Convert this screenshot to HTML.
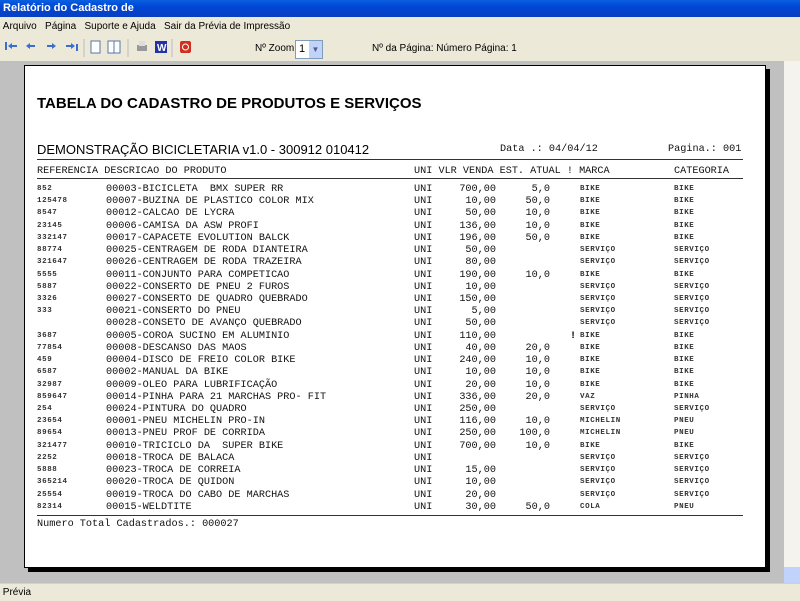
<!DOCTYPE html>
<html><head><meta charset="utf-8"><style>
body{margin:0;width:800px;height:600px;overflow:hidden;position:relative;background:#ece9d8;font-family:"Liberation Sans",sans-serif;}
.a{position:absolute;white-space:pre;}
#title{left:0;top:0;width:800px;height:17px;background:linear-gradient(#0a5fe0,#0046d5 40%,#0840c0);color:#fff;font-weight:bold;font-size:11px;line-height:17px;}
#menu{left:0;top:18px;width:800px;height:17px;font-size:10px;line-height:17px;background:#ece9d8}
#gray{left:0;top:61px;width:784px;height:522px;background:#c0c0c0;}
#sb{left:784px;top:61px;width:16px;height:522px;background:#f4f3ee;}
#paper{left:24px;top:65px;width:740px;height:501px;background:#fff;border:1px solid #000;box-shadow:4px 4px 0 #000;}
#status{left:0;top:583px;width:800px;height:17px;background:#ece9d8;border-top:1px solid #d4d0c8;font-size:10px;line-height:17px;}
.m{font-family:"Liberation Mono",monospace;font-size:10.2px;color:#111;}
.s{font-family:"Liberation Mono",monospace;font-size:7.5px;letter-spacing:0.6px;font-weight:bold;color:#333;}
.ln{position:absolute;left:37px;width:706px;height:1px;background:#333;}
</style></head><body>
<div class="a" id="title">&nbsp;Relatório do Cadastro de</div>
<div class="a" id="menu">&nbsp;Arquivo&nbsp;&nbsp; Página&nbsp;&nbsp; Suporte e Ajuda&nbsp;&nbsp; Sair da Prévia de Impressão</div>
<div class="a" style="left:0;top:36px;width:800px;height:25px;background:#ece9d8"></div>
<svg class="a" style="left:0;top:36px" width="200" height="24">
<g fill="#3a6fd0"><rect x="5" y="6" width="2" height="8"/><path d="M8 10l4-3v2h5v2h-5v2z"/>
<path d="M26 10l4-3v2h5v2h-5v2z"/><path d="M56 10l-4-3v2h-5v2h5v2z"/><path d="M75 10l-4-3v2h-5v2h5v2z"/><rect x="76" y="8" width="2" height="7"/></g>
<rect x="91" y="5" width="9" height="12" fill="#fff" stroke="#5577aa"/>
<rect x="108" y="5" width="6" height="12" fill="#fff" stroke="#5577aa"/><rect x="114" y="5" width="6" height="12" fill="#fff" stroke="#5577aa"/>
<rect x="137" y="9" width="10" height="6" fill="#999"/><rect x="139" y="5" width="6" height="5" fill="#ddd"/>
<rect x="155" y="5" width="12" height="12" fill="#2233aa"/><text x="157" y="15" font-size="10" fill="#fff" font-weight="bold">W</text>
<rect x="180" y="5" width="11" height="12" fill="#d03020" rx="2"/><circle cx="185.5" cy="11" r="3" fill="none" stroke="#fff"/>
<g stroke="#bbb"><line x1="84" y1="3" x2="84" y2="21"/><line x1="128" y1="3" x2="128" y2="21"/><line x1="172" y1="3" x2="172" y2="21"/></g>
</svg>
<div class="a" style="left:255px;top:43px;font-size:10px">Nº Zoom</div>
<div class="a" style="left:295px;top:40px;width:26px;height:17px;background:#fff;border:1px solid #7f9db9;font-size:11px;line-height:17px">&nbsp;1<span style="position:absolute;right:0;top:0;width:13px;height:17px;background:#c1d3fb;color:#4d6185;font-size:8px;text-align:center">▼</span></div>
<div class="a" style="left:372px;top:43px;font-size:10px">Nº da Página: Número Página: 1</div>
<div class="a" id="gray"></div><div class="a" id="sb"><div style="position:absolute;left:0;bottom:0;width:16px;height:16px;background:#c1d3fb"></div></div>
<div class="a" id="paper"></div>
<div class="a" style="left:37px;top:95px;font-size:15px;font-weight:bold">TABELA DO CADASTRO DE PRODUTOS E SERVIÇOS</div>
<div class="a" style="left:37px;top:142px;font-size:13px">DEMONSTRAÇÃO BICICLETARIA v1.0 - 300912 010412</div>
<div class="a m" style="left:500px;top:144px">Data .: 04/04/12</div>
<div class="a m" style="left:668px;top:144px">Pagina.: 001</div>
<div class="ln" style="top:159px"></div>
<div class="a m" style="left:37px;top:166px">REFERENCIA DESCRICAO DO PRODUTO</div>
<div class="a m" style="left:414px;top:166px">UNI VLR VENDA EST. ATUAL ! MARCA</div>
<div class="a m" style="left:674px;top:166px">CATEGORIA</div>
<div class="ln" style="top:178px"></div>
<div id="rows"></div>
<div class="ln" style="top:515px"></div>
<div class="a m" style="left:37px;top:519px">Numero Total Cadastrados.: 000027</div>
<div class="a" id="status">&nbsp;Prévia</div>
<script>
var d=[["852","00003-BICICLETA  BMX SUPER RR","700,00","5,0","BIKE","BIKE"],
["125478","00007-BUZINA DE PLASTICO COLOR MIX","10,00","50,0","BIKE","BIKE"],
["8547","00012-CALCAO DE LYCRA","50,00","10,0","BIKE","BIKE"],
["23145","00006-CAMISA DA ASW PROFI","136,00","10,0","BIKE","BIKE"],
["332147","00017-CAPACETE EVOLUTION BALCK","196,00","50,0","BIKE","BIKE"],
["88774","00025-CENTRAGEM DE RODA DIANTEIRA","50,00","","SERVIÇO","SERVIÇO"],
["321647","00026-CENTRAGEM DE RODA TRAZEIRA","80,00","","SERVIÇO","SERVIÇO"],
["5555","00011-CONJUNTO PARA COMPETICAO","190,00","10,0","BIKE","BIKE"],
["5887","00022-CONSERTO DE PNEU 2 FUROS","10,00","","SERVIÇO","SERVIÇO"],
["3326","00027-CONSERTO DE QUADRO QUEBRADO","150,00","","SERVIÇO","SERVIÇO"],
["333","00021-CONSERTO DO PNEU","5,00","","SERVIÇO","SERVIÇO"],
["","00028-CONSETO DE AVANÇO QUEBRADO","50,00","","SERVIÇO","SERVIÇO"],
["3687","00005-COROA SUCINO EM ALUMINIO","110,00","","BIKE","BIKE","!"],
["77854","00008-DESCANSO DAS MAOS","40,00","20,0","BIKE","BIKE"],
["459","00004-DISCO DE FREIO COLOR BIKE","240,00","10,0","BIKE","BIKE"],
["6587","00002-MANUAL DA BIKE","10,00","10,0","BIKE","BIKE"],
["32987","00009-OLEO PARA LUBRIFICAÇÃO","20,00","10,0","BIKE","BIKE"],
["859647","00014-PINHA PARA 21 MARCHAS PRO- FIT","336,00","20,0","VAZ","PINHA"],
["254","00024-PINTURA DO QUADRO","250,00","","SERVIÇO","SERVIÇO"],
["23654","00001-PNEU MICHELIN PRO-IN","116,00","10,0","MICHELIN","PNEU"],
["89654","00013-PNEU PROF DE CORRIDA","250,00","100,0","MICHELIN","PNEU"],
["321477","00010-TRICICLO DA  SUPER BIKE","700,00","10,0","BIKE","BIKE"],
["2252","00018-TROCA DE BALACA","","","SERVIÇO","SERVIÇO"],
["5888","00023-TROCA DE CORREIA","15,00","","SERVIÇO","SERVIÇO"],
["365214","00020-TROCA DE QUIDON","10,00","","SERVIÇO","SERVIÇO"],
["25554","00019-TROCA DO CABO DE MARCHAS","20,00","","SERVIÇO","SERVIÇO"],
["82314","00015-WELDTITE","30,00","50,0","COLA","PNEU"]];
var h="";d.forEach(function(r,i){var y=184+i*12.22;
h+='<div class="a s" style="left:37px;top:'+(y+1)+'px">'+r[0]+'</div>'+
'<div class="a m" style="left:106px;top:'+y+'px">'+r[1]+'</div>'+
'<div class="a m" style="left:414px;top:'+y+'px">UNI</div>'+
'<div class="a m" style="right:304px;top:'+y+'px">'+r[2]+'</div>'+
'<div class="a m" style="right:250px;top:'+y+'px">'+r[3]+'</div>'+
(r[6]?'<div class="a m" style="left:570px;top:'+y+'px;font-weight:bold">!</div>':'')+
'<div class="a s" style="left:580px;top:'+(y+1)+'px">'+r[4]+'</div>'+
'<div class="a s" style="left:674px;top:'+(y+1)+'px">'+r[5]+'</div>';});
document.getElementById("rows").innerHTML=h;
</script>
</body></html>
